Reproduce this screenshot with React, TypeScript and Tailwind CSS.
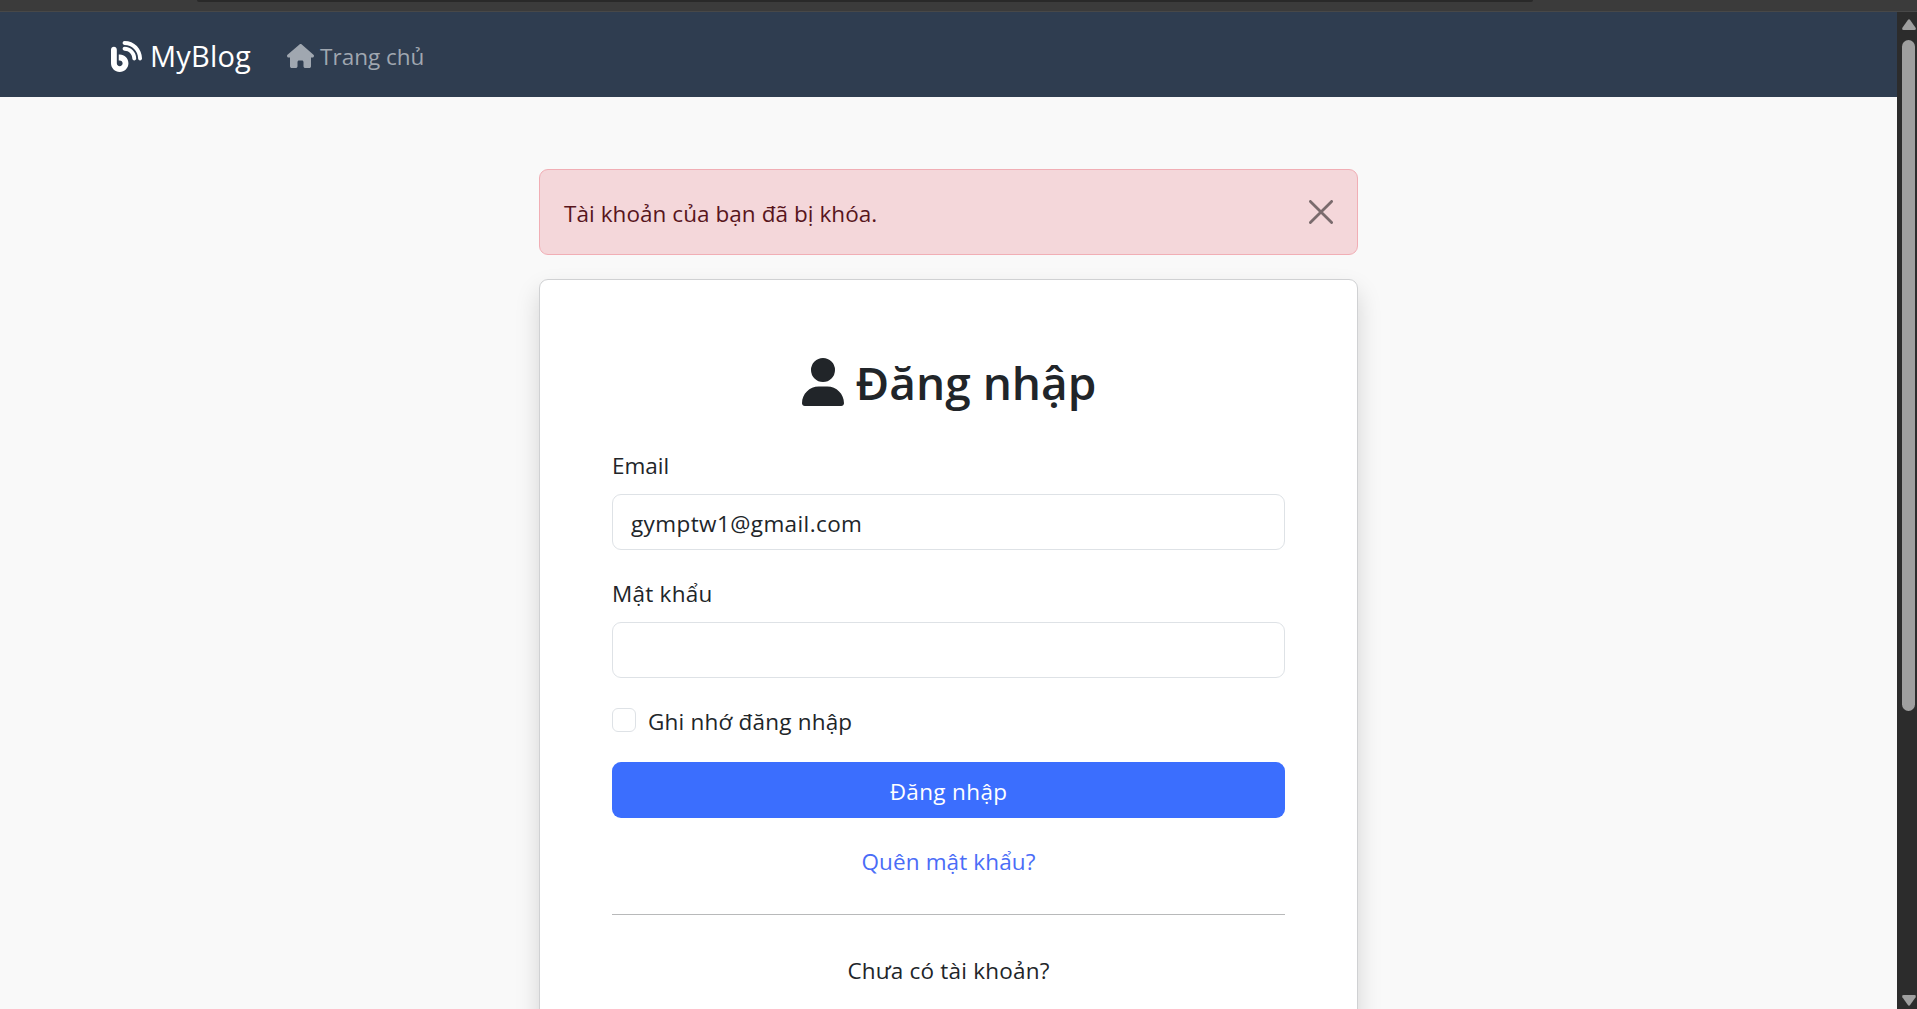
import { FaBlog, FaHouse, FaUser } from "react-icons/fa6";

const field =
  "mt-3 h-14 w-full rounded-[9px] border border-[#dee2e6] bg-white px-[18px] pt-[3px] tracking-[0.4px] text-[#212529] outline-none";

function ScrollBar() {
  return (
    <div className="flex w-5 shrink-0 flex-col items-center bg-[#2c2c2c] pl-[3px] pt-[7px] pb-[3px]">
      <svg className="h-[11px] w-[14px] shrink-0" viewBox="0 0 14 11" fill="#9f9f9f">
        <path d="M5.7 1.2Q7-.6 8.3 1.2L13.6 8.8Q14.4 11 12.4 11H1.6Q-.4 11 .4 8.8Z" />
      </svg>
      <div className="mt-[10px] h-[671px] w-[13px] shrink-0 rounded-full bg-[#9f9f9f]" />
      <svg className="mt-auto h-[11px] w-[14px] shrink-0 rotate-180" viewBox="0 0 14 11" fill="#9f9f9f">
        <path d="M5.7 1.2Q7-.6 8.3 1.2L13.6 8.8Q14.4 11 12.4 11H1.6Q-.4 11 .4 8.8Z" />
      </svg>
    </div>
  );
}

export default function App() {
  return (
    <div className="flex h-[1009px] w-[1917px] flex-col overflow-hidden bg-[#f9f9f9] font-['Open_Sans','Noto_Sans',sans-serif] text-[22.5px] text-[#212529]">
      <div className="h-3 shrink-0 border-b border-[#484848] bg-[#3b3b3b]">
        <div className="ml-[197px] h-0.5 w-[1336px] rounded-b-md bg-[#292929]" />
      </div>
      <div className="flex min-h-0 flex-1">
        <div className="min-w-0 flex-1 overflow-hidden">
          <nav className="flex h-[85px] items-center bg-[#2f3d50] pl-[111px]">
            <a className="flex items-center gap-2 text-[29px] text-white">
              <FaBlog className="mt-[3px] size-[31px]" />
              <span className="pt-[3px] tracking-[0.2px]">MyBlog</span>
            </a>
            <a className="ml-9 flex items-center gap-[6px] text-[#a0a7b0]">
              <FaHouse className="mt-0.5 h-6 w-[27px]" />
              <span className="pt-1">Trang chủ</span>
            </a>
          </nav>
          <main className="mx-auto w-[819px] pt-[72px]">
            <div className="flex h-[86px] items-center justify-between rounded-[9px] border border-[#f1aeb5] bg-[#f4d7da] px-6 text-[#58151c]">
              <span className="pt-[3px] tracking-[0.06px]">Tài khoản của bạn đã bị khóa.</span>
              <svg className="size-6" viewBox="0 0 24 24" stroke="#7a6b6d" strokeWidth="2.8" strokeLinecap="round">
                <path d="M1.4 1.4 22.6 22.6M22.6 1.4 1.4 22.6" />
              </svg>
            </div>
            <section className="mt-6 h-[900px] rounded-[9px] border border-[#d0d1d3] bg-white px-[72px] pt-[72px] shadow-[0_12px_24px_rgba(0,0,0,0.15)]">
              <h1 className="flex h-[58px] items-center justify-center gap-3 pt-0.5 pl-px text-[46px] font-semibold">
                <FaUser className="h-12 w-[42px]" />
                <span>Đăng nhập</span>
              </h1>
              <form className="mt-9">
                <label className="block h-9 leading-[39px]">Email</label>
                <input className={field} defaultValue="gymptw1@gmail.com" />
                <label className="mt-6 block h-9 leading-[39px] tracking-[0.25px]">Mật khẩu</label>
                <input className={field} type="password" />
                <label className="mt-6 flex h-9 items-center gap-3 tracking-[0.2px]">
                  <span className="size-6 rounded-md border border-[#dee2e6] bg-white" />
                  <span className="pt-[3px]">Ghi nhớ đăng nhập</span>
                </label>
                <button
                  type="button"
                  className="mt-6 h-14 w-full rounded-[9px] bg-[#3b6efe] pt-[3px] tracking-[0.35px] text-white"
                >
                  Đăng nhập
                </button>
              </form>
              <a className="mt-6 block h-9 text-center leading-[39px] tracking-[0.12px] text-[#4a6cf7]">
                Quên mật khẩu?
              </a>
              <hr className="my-9 border-[#b8b9ba]" />
              <p className="h-9 text-center leading-[39px] tracking-[0.2px]">Chưa có tài khoản?</p>
            </section>
          </main>
        </div>
        <ScrollBar />
      </div>
    </div>
  );
}
